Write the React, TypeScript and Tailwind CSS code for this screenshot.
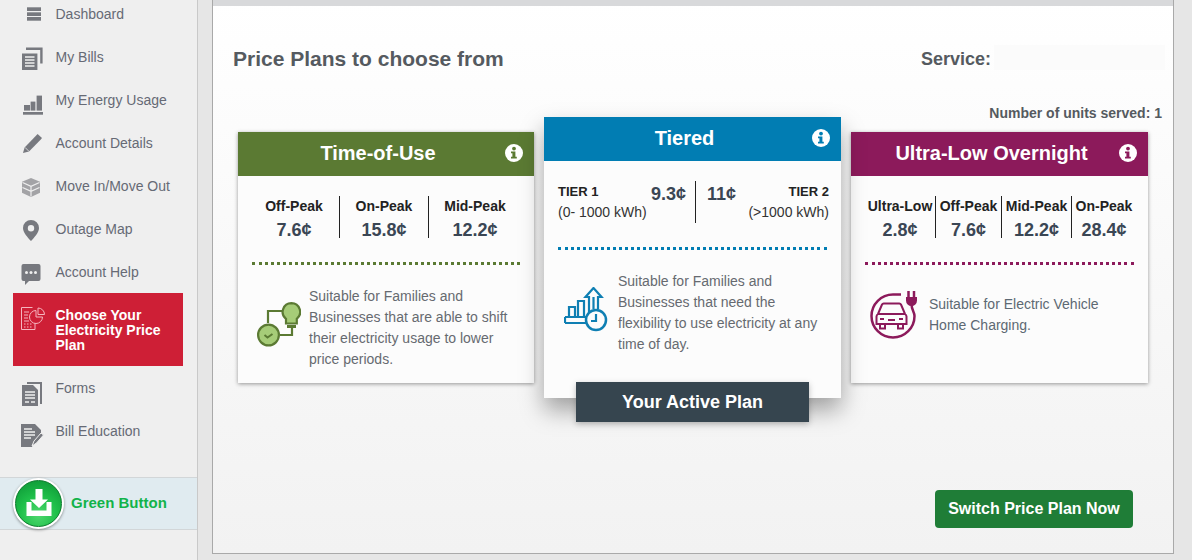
import React from "react";

function InfoIcon() {
  return (
    <svg width="18" height="18" viewBox="0 0 18 18" className="absolute right-[11px] top-[12px]">
      <circle cx="9" cy="9" r="9" fill="#fff" />
      <circle cx="9" cy="4.600" r="1.900" fill="currentColor" />
      <path d="M6 7.500h4.400v5.300h1.400v1.800H6v-1.800h1.400V9.300H6z" fill="currentColor" />
    </svg>
  );
}

const navIcons: Record<string, React.ReactNode> = {
  dashboard: (
    <>
      <rect x="7" y="3.300" width="14" height="3.700" />
      <rect x="7" y="8.300" width="14" height="3.700" />
      <rect x="7" y="13" width="14" height="3.700" />
    </>
  ),
  bills: (
    <>
      <path d="M6 .5h16.600v16h-2.400V3H6z" />
      <path d="M2 6.500h15.400V23H2z" />
      <path d="M5 10h9.500M5 13h9.500M5 16h9.500M5 19h9.500" stroke="#efefef" strokeWidth="1.500" />
    </>
  ),
  usage: (
    <>
      <rect x="4" y="15" width="6" height="5.600" />
      <rect x="10.600" y="11.600" width="4.800" height="9" />
      <rect x="16.600" y="5.600" width="5.400" height="15" />
      <rect x="3" y="22" width="20" height="2.700" />
    </>
  ),
  details: (
    <>
      <path d="M3 20l1.600-5.600L16.400 2.200 17.600 1l4.400 4-1.200 1.400L9 18.600z" />
      <path d="M5 14.400l4 4" stroke="#efefef" strokeWidth=".8" />
    </>
  ),
  move: (
    <>
      <path d="M11 2l9 3.800v11L11 21 2 16.800V5.800z" fill="#a3a3a6" />
      <path d="M2.500 6.500l8.500 3.800 8.500-3.800M11 10.300V20.500M2.500 11.500l8.500 3.800 8.500-3.800" stroke="#efefef" strokeWidth="1.200" fill="none" />
    </>
  ),
  map: (
    <path
      fillRule="evenodd"
      d="M11 1a8 8 0 0 1 8 8c0 4.600-4.800 9.500-8 13-3.200-3.500-8-8.400-8-13a8 8 0 0 1 8-8zm0 5a3.200 3.200 0 1 0 0 6.400A3.200 3.200 0 0 0 11 6z"
    />
  ),
  help: (
    <>
      <path d="M3.500 2h15a2 2 0 0 1 2 2v13a2 2 0 0 1-2 2H9l-4 4v-4H3.500a2 2 0 0 1-2-2V4a2 2 0 0 1 2-2z" />
      <circle cx="6.500" cy="10.500" r="1.500" fill="#efefef" />
      <circle cx="11" cy="10.500" r="1.500" fill="#efefef" />
      <circle cx="15.500" cy="10.500" r="1.500" fill="#efefef" />
    </>
  ),
  forms: (
    <>
      <path d="M7 4h15v22h-2V6H7z" />
      <path d="M2 7h11l5 5v16H2z" />
      <path d="M5 14h10M5 17h10M5 20h10M5 24h4M11 24h4" stroke="#efefef" strokeWidth="1.600" />
    </>
  ),
  education: (
    <>
      <path d="M1 3h14l6 6v5l-8 9-1 3H1z" />
      <path d="M4 8h8M4 11h11M4 14h11M4 17h7" stroke="#efefef" strokeWidth="1.400" />
      <path d="M12 25l2-5 7-8 2.500 2-7 8z" stroke="#efefef" strokeWidth="1" />
    </>
  ),
};

function NavRow({ icon, label }: { icon: string; label: string }) {
  return (
    <div className="flex h-[31px] mb-3 pl-[20px] gap-[11.5px]">
      <svg width="24" height="32" viewBox="0 0 24 32" fill="#77797f" className="shrink-0 overflow-visible">
        {navIcons[icon]}
      </svg>
      <span className="text-[14px] leading-[20px] text-[#666a75]">{label}</span>
    </div>
  );
}

function Sidebar() {
  return (
    <aside className="w-[198px] h-[560px] shrink-0 bg-[#efefef] border-r border-[#c9c9c9] pt-1">
      <NavRow icon="dashboard" label="Dashboard" />
      <NavRow icon="bills" label="My Bills" />
      <NavRow icon="usage" label="My Energy Usage" />
      <NavRow icon="details" label="Account Details" />
      <NavRow icon="move" label="Move In/Move Out" />
      <NavRow icon="map" label="Outage Map" />
      <NavRow icon="help" label="Account Help" />
      <div className="flex -mt-3 ml-[13px] mr-[14px] h-[73px] mb-3 bg-[#ce1f36] pl-[8px] pt-[15px] gap-[10.5px]">
        <svg width="24" height="24" viewBox="0 0 24 24" fill="none" stroke="#f5b5be" strokeWidth="1" className="shrink-0 -mt-[1px]">
          <path d="M14 16v6.500H.500V.500h11" />
          <path d="M3 5h5M3 8h4M3 11h4M3 14h5M3 17h1.500M6 17h1.500M9 17h1.500M3 20h1.500M6 20h1.500M9 20h1.500" />
          <path d="M15 3.500a6.500 6.500 0 1 0 6.500 6.500H15z" fill="#ce1f36" />
          <path d="M17 1v6.500h6.500A6.500 6.500 0 0 0 17 1z" />
        </svg>
        <span className="w-[112px] text-[14px] leading-[15px] font-bold text-white">Choose Your Electricity Price Plan</span>
      </div>
      <NavRow icon="forms" label="Forms" />
      <NavRow icon="education" label="Bill Education" />
      <div className="flex items-center h-[53px] mt-[25px] pl-[13px] gap-[7px] bg-[#e0ebf0] border-y border-[#d2d6d8]">
        <div className="w-[51px] h-[51px] shrink-0 rounded-full bg-white p-[2px] shadow-[0_1px_3px_rgba(0,0,0,0.4)]">
          <div className="w-[47px] h-[47px] rounded-full border border-[#0a7a2c] bg-[radial-gradient(circle_at_50%_75%,#4fd86f_0%,#1fc04a_45%,#0a9133_100%)] flex items-center justify-center">
            <svg width="30" height="30" viewBox="0 0 30 30" fill="#fff">
              <path d="M11.500 0h7v10.500H24L15 19 6 10.500h5.500z" />
              <path d="M2.500 13h5v8.500h15V13h5v14h-25z" />
            </svg>
          </div>
        </div>
        <span className="text-[15px] font-bold text-[#12b34a]">Green Button</span>
      </div>
    </aside>
  );
}

function Rates({ items }: { items: { label: string; value: string; w: string }[] }) {
  return (
    <div className="flex">
      {items.map((r, i) => (
        <div key={r.label} className={`${r.w} h-[42px] text-center ${i < items.length - 1 ? "border-r border-[#222]" : ""}`}>
          <div className="text-[14px] leading-[20px] font-bold text-[#222]">{r.label}</div>
          <div className="mt-[2px] text-[18px] leading-[24px] font-bold text-[#3a4654]">{r.value}</div>
        </div>
      ))}
    </div>
  );
}

function PlanHead({ title, bg, color }: { title: string; bg: string; color: string }) {
  return (
    <div className={`relative h-[44px] ${bg} ${color} pr-4 pb-[2px] flex items-center justify-center`}>
      <span className="text-[20px] font-bold text-white">{title}</span>
      <InfoIcon />
    </div>
  );
}

function ClockBulbIcon() {
  return (
    <svg width="44" height="46" viewBox="0 0 44 46" fill="none" stroke="#5b7a33" strokeWidth="2.200" className="shrink-0 mt-[16px]">
      <path d="M11 21V9h15M23 33h12v-8" />
      <path d="M34.400 1.100a8.800 8.800 0 0 0-5.400 15.700v4.700h10.800v-4.700a8.800 8.800 0 0 0-5.400-15.700z" fill="#a6cc78" />
      <path d="M30 24.500h9" strokeWidth="3" />
      <circle cx="11.500" cy="33" r="10.400" fill="#a6cc78" />
      <path d="M7.500 33l3 2.500 5-3.500" strokeWidth="2" />
    </svg>
  );
}

function BarsClockIcon() {
  return (
    <svg width="44" height="45" viewBox="0 0 44 45" fill="none" stroke="#0f7fb3" strokeWidth="2.200" className="shrink-0 mt-[16px]">
      <path d="M1 30h26M1 36h24M1 30v6" />
      <path d="M5 30V20h6v10M14 30V14h6v16" />
      <path d="M25 30V10h-3.500l8-9 8 9H34v12M29.500 10v12" />
      <circle cx="32" cy="33" r="10" fill="#fcfcfc" strokeWidth="2.500" />
      <path d="M32 27v7h-5" />
    </svg>
  );
}

function CarPlugIcon() {
  return (
    <svg width="48" height="48" viewBox="0 0 48 48" fill="none" stroke="#8c1a5b" strokeWidth="2" className="shrink-0">
      <path d="M31 3.500h-8a21.500 21.500 0 1 0 21.500 21.500c0-4-3-6-3-12" strokeWidth="2.500" />
      <path d="M36 6h11v3.500a5.500 5.500 0 0 1-11 0z" fill="#8c1a5b" stroke="none" />
      <path d="M38.500 0v6M44 0v6" strokeWidth="2.500" />
      <path d="M8 23l4-9.500a2 2 0 0 1 2-1h15a2 2 0 0 1 2 1l4 9.500a3 3 0 0 1 1.500 2.500V33h-30v-7.500A3 3 0 0 1 8 23zM8 23h27M10 33v4.500h5V33M28 33v4.500h5V33" />
      <path d="M10 28h4M29 28h4M18 29h7" />
    </svg>
  );
}

function Description({ icon, gap, pl, children, color, align }: { icon: React.ReactNode; gap: string; pl: string; children: React.ReactNode; color: string; align: string }) {
  return (
    <div className={`flex ${align} ${gap} ${pl}`}>
      {icon}
      <p className={`text-[14px] leading-[21px] ${color}`}>{children}</p>
    </div>
  );
}

export default function App() {
  return (
    <div className="flex w-[1192px] h-[560px] overflow-hidden bg-[#e6e6e6] font-['Liberation_Sans',Arial,sans-serif]">
      <Sidebar />
      <main className="ml-[14px] w-[962px] h-[554px] flex flex-col border-x border-b border-[#a9a9a9] bg-gradient-to-b from-white to-[#f2f2f2]">
        <div className="h-[6px] bg-[#d8d9db]" />
        <div className="mt-[39px] h-[25px] flex items-center pl-[20px] pr-[8px]">
          <h1 className="pt-[2px] text-[21px] font-bold text-[#555a60]">Price Plans to choose from</h1>
          <span className="ml-auto pt-[4px] text-[18px] font-bold text-[#555a60]">Service:</span>
          <div className="ml-[3px] w-[171px] h-[25px] bg-[#fbfbfb]" />
        </div>
        <div className="mt-[35px] pr-[11px] text-right text-[14px] leading-[16px] font-bold text-[#555a60]">Number of units served: 1</div>
        <div className="mt-[11px] ml-[25px] flex items-start gap-[10px]">
          <section className="w-[296px] h-[251px] bg-[#fcfcfc] shadow-[0_1px_4px_rgba(0,0,0,0.4)]">
            <PlanHead title="Time-of-Use" bg="bg-[#5b7a33]" color="text-[#5b7a33]" />
            <div className="pt-[20px] pl-[11px]">
              <Rates
                items={[
                  { label: "Off-Peak", value: "7.6¢", w: "w-[91px]" },
                  { label: "On-Peak", value: "15.8¢", w: "w-[89px]" },
                  { label: "Mid-Peak", value: "12.2¢", w: "w-[92px]" },
                ]}
              />
            </div>
            <div className="mt-[24px] mx-[14px] border-t-[3px] border-dotted border-[#5b7a33]" />
            <div className="mt-[21px]">
              <Description icon={<ClockBulbIcon />} align="items-start" gap="gap-[8px]" pl="pl-[19px]" color="text-[#666a70]">
                Suitable for Families and<br />Businesses that are able to shift<br />their electricity usage to lower<br />price periods.
              </Description>
            </div>
          </section>

          <section className="relative z-10 w-[297px] h-[281px] -mt-[15px] bg-[#fcfcfc] shadow-[0_12px_22px_rgba(0,0,0,0.35)]">
            <PlanHead title="Tiered" bg="bg-[#017db3]" color="text-[#017db3]" />
            <div className="mt-[20px] pl-[14px] pr-[12px] flex">
              <div className="w-[138px] h-[42px] flex justify-between border-r border-[#222] pr-[9px]">
                <div className="whitespace-nowrap">
                  <div className="mt-[1px] text-[13px] leading-[20px] font-bold text-[#222]">TIER 1</div>
                  <div className="text-[14px] leading-[21px] text-[#333]">(0- 1000 kWh)</div>
                </div>
                <div className="mt-[1px] text-[18px] leading-[24px] font-bold text-[#3a4654]">9.3¢</div>
              </div>
              <div className="flex-1 flex justify-between pl-[11px]">
                <div className="mt-[1px] text-[18px] leading-[24px] font-bold text-[#3a4654]">11¢</div>
                <div className="text-right whitespace-nowrap">
                  <div className="mt-[1px] text-[13px] leading-[20px] font-bold text-[#222]">TIER 2</div>
                  <div className="text-[14px] leading-[21px] text-[#333]">(&gt;1000 kWh)</div>
                </div>
              </div>
            </div>
            <div className="mt-[24px] mx-[14px] border-t-[3px] border-dotted border-[#017db3]" />
            <div className="mt-[21px]">
              <Description icon={<BarsClockIcon />} align="items-start" gap="gap-[10px]" pl="pl-[20px]" color="text-[#666a70]">
                Suitable for Families and<br />Businesses that need the<br />flexibility to use electricity at any<br />time of day.
              </Description>
            </div>
            <div className="absolute left-[32px] top-[265px] w-[233px] h-[40px] bg-[#36454f] flex items-center justify-center text-[18px] font-bold text-white shadow-[0_2px_6px_rgba(0,0,0,0.25)]">
              Your Active Plan
            </div>
          </section>

          <section className="w-[297px] h-[251px] bg-[#fcfcfc] shadow-[0_1px_4px_rgba(0,0,0,0.4)]">
            <PlanHead title="Ultra-Low Overnight" bg="bg-[#8c1a5b]" color="text-[#8c1a5b]" />
            <div className="pt-[20px] pl-[14px]">
              <Rates
                items={[
                  { label: "Ultra-Low", value: "2.8¢", w: "w-[71px]" },
                  { label: "Off-Peak", value: "7.6¢", w: "w-[66px]" },
                  { label: "Mid-Peak", value: "12.2¢", w: "w-[70px]" },
                  { label: "On-Peak", value: "28.4¢", w: "w-[64px]" },
                ]}
              />
            </div>
            <div className="mt-[24px] mx-[14px] border-t-[3px] border-dotted border-[#8c1a5b]" />
            <div className="mt-[26px]">
              <Description icon={<CarPlugIcon />} align="items-center" gap="gap-[11px]" pl="pl-[19px]" color="text-[#5d6973]">
                Suitable for Electric Vehicle<br />Home Charging.
              </Description>
            </div>
          </section>
        </div>
        <div className="mt-[92px] mr-[40px] flex justify-end">
          <button className="w-[198px] h-[38px] rounded-[4px] bg-[#1f7d37] text-[16px] font-bold text-white">Switch Price Plan Now</button>
        </div>
      </main>
    </div>
  );
}
